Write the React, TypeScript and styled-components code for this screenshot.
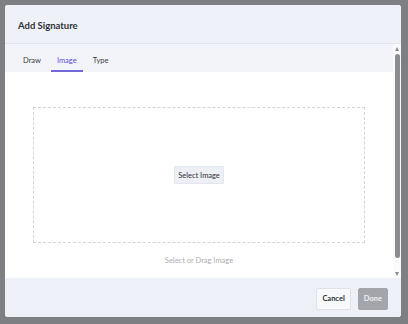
import styled, { createGlobalStyle } from "styled-components";

const GlobalStyle = createGlobalStyle`
  html, body {
    margin: 0;
    padding: 0;
    background: #7e7f82;
    font-family: Lato, "Open Sans", sans-serif;
  }
`

const Backdrop = styled.div`
  width: 408px;
  height: 324px;
  padding: 5px 0 0 5px;
  box-sizing: border-box;
`

const Modal = styled.div`
  display: flex;
  flex-direction: column;
  width: 396px;
  height: 312px;
  background: #ffffff;
  border-radius: 3px;
  overflow: hidden;
`

const Header = styled.div`
  display: flex;
  align-items: center;
  flex: 0 0 39px;
  padding: 2px 0 0 13px;
  box-sizing: border-box;
  background: #eff1f8;
  border-bottom: 1px solid #e2e5ee;
`

const Title = styled.h2`
  margin: 0;
  font-size: 9.5px;
  font-weight: 700;
  color: #2f3136;
`

const BodyRow = styled.div`
  display: flex;
  flex: 1;
  min-height: 0;
`

const Main = styled.div`
  flex: 1;
  overflow: hidden;
`

// hand drawn scrollbar, the headless browser hides native ones
const ScrollTrack = styled.div`
  display: flex;
  flex-direction: column;
  align-items: center;
  flex: 0 0 8px;
  padding: 3px 0 2px;
  background: #fbfbfc;
`

const Arrow = styled.div<{ $down?: boolean }>`
  width: 0;
  height: 0;
  border-left: 2.5px solid transparent;
  border-right: 2.5px solid transparent;
  ${p => (p.$down ? "border-top" : "border-bottom")}: 4px solid #8b8c8f;
`

const Thumb = styled.div`
  width: 5px;
  margin: 3px 0 14px;
  flex: 1;
  border-radius: 3px;
  background: #8b8c8f;
`

const Tabs = styled.div`
  display: flex;
  gap: 4px;
  height: 28px;
  padding-left: 12px;
  box-sizing: border-box;
  background: #f3f4f9;
`

const Tab = styled.div<{ $active?: boolean }>`
  display: flex;
  align-items: flex-end;
  padding: 0 6px 5px;
  font-size: 7.5px;
  color: ${p => (p.$active ? "#5a4fcf" : "#3a3c42")};
  border-bottom: 2px solid ${p => (p.$active ? "#7467d8" : "transparent")};
`

const Content = styled.div`
  display: flex;
  flex-direction: column;
  align-items: center;
  padding: 35px 28px 22px;
`

const DropZone = styled.div`
  display: flex;
  align-items: center;
  justify-content: center;
  width: 100%;
  height: 136px;
  box-sizing: border-box;
  border: 1px dashed #d3d5da;
`

const SelectButton = styled.button`
  height: 18px;
  padding: 0 3px;
  font-family: inherit;
  font-size: 7.5px;
  color: #2f3136;
  background: #eef0f7;
  border: 1px solid #e3e6ee;
  border-radius: 1px;
`

const Hint = styled.div`
  margin-top: 13px;
  font-size: 7.5px;
  color: #acadb0;
`

const Footer = styled.div`
  display: flex;
  align-items: center;
  justify-content: flex-end;
  gap: 7px;
  flex: 0 0 39px;
  padding: 2px 13px 0 0;
  box-sizing: border-box;
  background: #eef0f8;
`

const FooterButton = styled.button<{ $primary?: boolean }>`
  height: 22px;
  padding: 0 5px;
  font-family: inherit;
  font-size: 7.5px;
  font-weight: 700;
  color: ${p => (p.$primary ? "#eeeff2" : "#2f3136")};
  background: ${p => (p.$primary ? "#a3a5aa" : "#f8f9fc")};
  border: 1px solid ${p => (p.$primary ? "#a3a5aa" : "#dfe2ea")};
  border-radius: 2px;
`

export default function App() {
  return (
    <Backdrop>
      <GlobalStyle />
      <Modal>
        <Header>
          <Title>Add Signature</Title>
        </Header>
        <BodyRow>
          <Main>
            <Tabs>
              <Tab>Draw</Tab>
              <Tab $active>Image</Tab>
              <Tab>Type</Tab>
            </Tabs>
            <Content>
              <DropZone>
                <SelectButton>Select Image</SelectButton>
              </DropZone>
              <Hint>Select or Drag Image</Hint>
            </Content>
          </Main>
          <ScrollTrack>
            <Arrow />
            <Thumb />
            <Arrow $down />
          </ScrollTrack>
        </BodyRow>
        <Footer>
          <FooterButton>Cancel</FooterButton>
          <FooterButton $primary>Done</FooterButton>
        </Footer>
      </Modal>
    </Backdrop>
  )
}
